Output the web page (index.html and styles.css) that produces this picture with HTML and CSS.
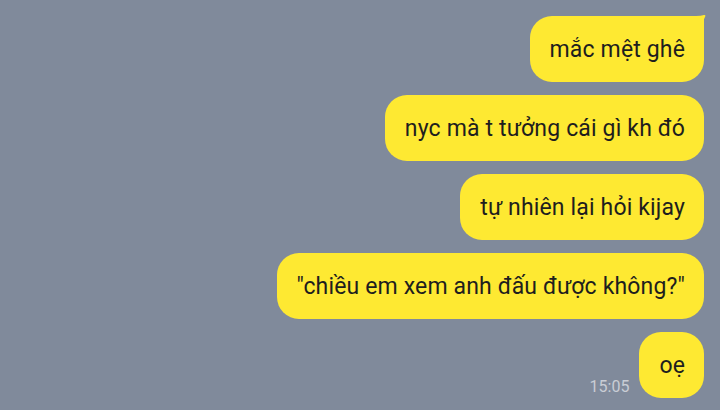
FILE: index.html
```html
<!DOCTYPE html>
<html>
<head>
  <title>Chat</title>
  <meta charset="UTF-8" />
  <meta name="viewport" content="width=device-width, initial-scale=1.0">
  <link rel="stylesheet" href="styles.css">
</head>
<body>
  <div class="chat">
    <div class="row">
      <div class="bubble first">
        mắc mệt ghê
        <svg class="tail" width="24" height="20" viewBox="0 0 24 20">
          <path d="M0 0 L12 0 Q17 0 20 -1 Q22.5 -1.5 20.5 2 Q18.5 5.5 18.5 10 L18.5 20 L0 20 Z" fill="#fee932" transform="translate(0,1)"/>
        </svg>
      </div>
    </div>
    <div class="row">
      <div class="bubble">nyc mà t tưởng cái gì kh đó</div>
    </div>
    <div class="row">
      <div class="bubble">tự nhiên lại hỏi kijay</div>
    </div>
    <div class="row">
      <div class="bubble">"chiều em xem anh đấu được không?"</div>
    </div>
    <div class="row">
      <span class="time">15:05</span>
      <div class="bubble">oẹ</div>
    </div>
  </div>
</body>
</html>
```

FILE: styles.css
```css
body {
  margin: 0;
  background-color: #808a9b;
  font-family: Roboto, "Noto Sans", sans-serif;
  color: #1e1e1e;
}
.chat {
  display: flex;
  flex-direction: column;
  align-items: flex-end;
  gap: 13px;
  padding: 16px 16px 0 0;
}
.row {
  display: flex;
  align-items: flex-end;
  gap: 9px;
}
.bubble {
  position: relative;
  background-color: #fee932;
  border-radius: 22px;
  height: 66px;
  padding: 0 19px 0 20px;
  display: flex;
  align-items: center;
  font-size: 23px;
  letter-spacing: 0.15px;
  white-space: nowrap;
}
.bubble.first {
  border-top-right-radius: 4px;
}
.tail {
  position: absolute;
  top: -1px;
  right: -4px;
  overflow: visible;
}
.time {
  font-size: 16px;
  color: #c9cdd5;
  margin-bottom: 2px;
  margin-right: 1px;
}
```
